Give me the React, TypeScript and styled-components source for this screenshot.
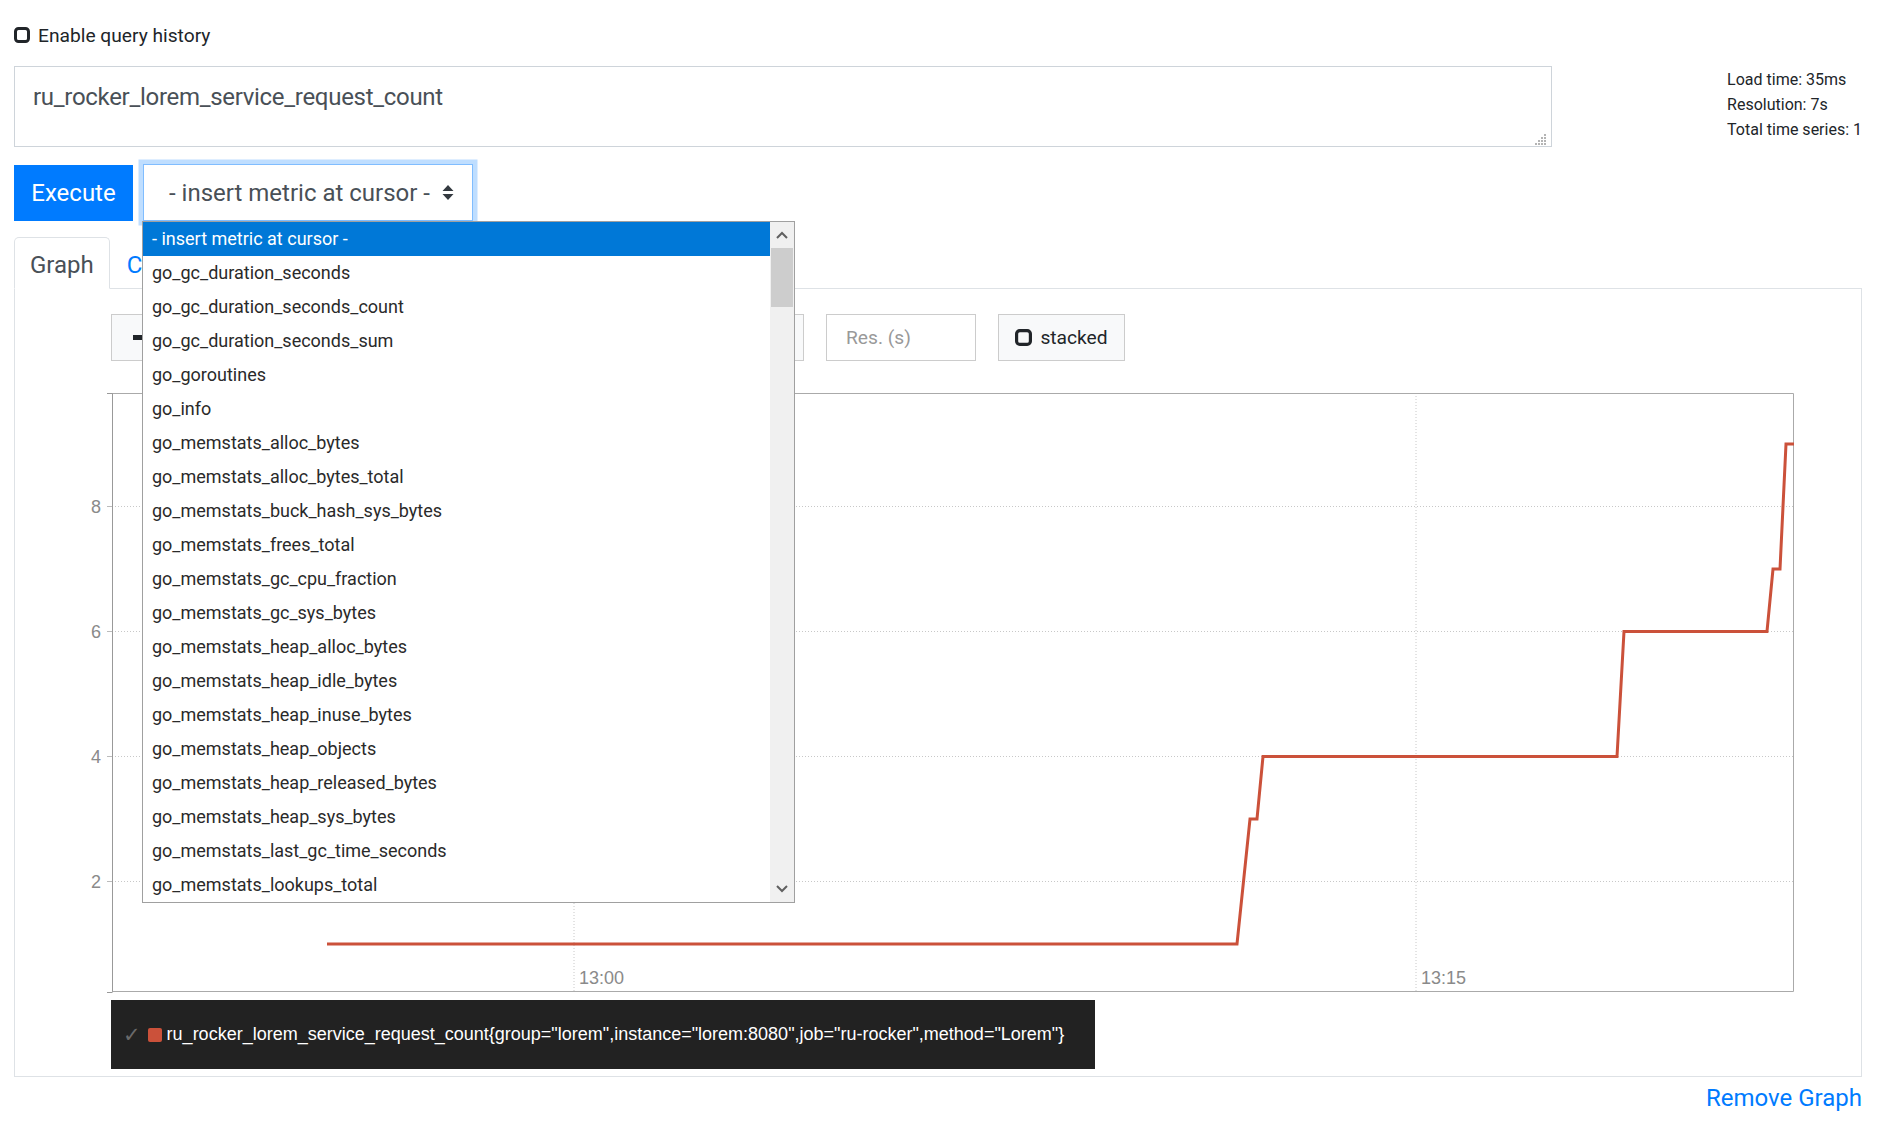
import { createGlobalStyle, styled } from "styled-components";

const METRICS = [
  "- insert metric at cursor -",
  "go_gc_duration_seconds",
  "go_gc_duration_seconds_count",
  "go_gc_duration_seconds_sum",
  "go_goroutines",
  "go_info",
  "go_memstats_alloc_bytes",
  "go_memstats_alloc_bytes_total",
  "go_memstats_buck_hash_sys_bytes",
  "go_memstats_frees_total",
  "go_memstats_gc_cpu_fraction",
  "go_memstats_gc_sys_bytes",
  "go_memstats_heap_alloc_bytes",
  "go_memstats_heap_idle_bytes",
  "go_memstats_heap_inuse_bytes",
  "go_memstats_heap_objects",
  "go_memstats_heap_released_bytes",
  "go_memstats_heap_sys_bytes",
  "go_memstats_last_gc_time_seconds",
  "go_memstats_lookups_total",
];

// chart geometry (svg coords, origin 32px left of the plot's y axis)
const PLOT_LEFT = 32;
const PLOT_RIGHT = 1714;
const PLOT_BOTTOM = 599;
const valueY = (v: number) => 613.5 - 62.5 * v;

const SERIES: [number, number][] = [
  [247, 1],
  [1157, 1],
  [1170, 3],
  [1177, 3],
  [1183, 4],
  [1537, 4],
  [1544, 6],
  [1687, 6],
  [1693, 7],
  [1700, 7],
  [1706, 9],
  [1714, 9],
];

const GlobalStyle = createGlobalStyle`
  body {
    margin: 0;
    background: #fff;
    color: #212529;
    font-family: Roboto, "Segoe UI", "Liberation Sans", sans-serif;
  }
  * { box-sizing: border-box; }
`;

const Page = styled.div`
  padding: 25px 18px 20px 14px;
`;

const HistoryToggle = styled.label`
  display: flex;
  align-items: center;
  gap: 8px;
  height: 20px;
  font-size: 19.2px;
  color: #212529;
`;

const QueryRow = styled.div`
  display: grid;
  grid-template-columns: 1538px 1fr;
  margin-top: 21px;
`;

const ExpressionBox = styled.div`
  position: relative;
  height: 81px;
  border: 1px solid #ced4da;
  padding: 12px 18px;
  font-size: 24px;
  letter-spacing: -0.3px;
  line-height: 36px;
  color: #495057;
`;

const Grip = styled.svg`
  position: absolute;
  right: 4px;
  bottom: 1px;
`;

const Stats = styled.div`
  justify-self: end;
  font-size: 16px;
  line-height: 25px;
  color: #212529;
  margin-top: 1px;
`;

const ActionRow = styled.div`
  display: flex;
  align-items: flex-start;
  margin-top: 17px;
`;

const ExecuteButton = styled.button`
  width: 119px;
  height: 56px;
  margin-top: 1px;
  border: none;
  background: #007bff;
  color: #fff;
  font-family: inherit;
  font-size: 24px;
  padding: 0;
`;

const SelectWrap = styled.div`
  position: relative;
  margin-left: 10px;
  z-index: 5;
`;

const SelectBox = styled.div`
  width: 330px;
  height: 57px;
  border: 1px solid #80bdff;
  box-shadow: 0 0 0 4.5px rgba(0, 123, 255, 0.25);
  display: flex;
  align-items: center;
  justify-content: space-between;
  padding: 0 18px 0 25px;
  font-size: 24px;
  color: #495057;
`;

const Dropdown = styled.div`
  position: absolute;
  left: -1px;
  top: 57px;
  width: 653px;
  border: 1px solid #a0a0a0;
  background: #fff;
  display: flex;
`;

const OptionList = styled.div`
  flex: 1;
`;

const Option = styled.div<{ $active?: boolean }>`
  height: 34px;
  line-height: 34px;
  padding-left: 9px;
  font-size: 18px;
  white-space: nowrap;
  background: ${({ $active }) => ($active ? "#0078d7" : "#fff")};
  color: ${({ $active }) => ($active ? "#fff" : "#2a2a2a")};
`;

const Scrollbar = styled.div`
  width: 24px;
  background: #f0f0f0;
  display: flex;
  flex-direction: column;
`;

const ScrollArrow = styled.div`
  height: 26px;
  display: flex;
  align-items: center;
  justify-content: center;
`;

const ScrollThumb = styled.div`
  height: 59px;
  margin: 0 1px;
  background: #cdcdcd;
`;

const ScrollTrack = styled.div`
  flex: 1;
`;

const TabBar = styled.div`
  display: flex;
  height: 52px;
  margin-top: 16px;
  border-bottom: 1px solid #dee2e6;
`;

const Tab = styled.div<{ $active?: boolean }>`
  height: 52px;
  padding: 4px 15px 0 ${({ $active }) => ($active ? 15 : 16)}px;
  display: flex;
  align-items: center;
  font-size: 24px;
  border: 1px solid ${({ $active }) => ($active ? "#dee2e6" : "transparent")};
  border-bottom-color: ${({ $active }) => ($active ? "#fff" : "transparent")};
  border-radius: 5px 5px 0 0;
  background: ${({ $active }) => ($active ? "#fff" : "transparent")};
  color: ${({ $active }) => ($active ? "#495057" : "#007bff")};
  margin-bottom: -1px;
`;

const Panel = styled.div`
  border: 1px solid #dee2e6;
  border-top: none;
  padding: 25px 67px 7px 96px;
`;

const Controls = styled.div`
  display: flex;
  height: 47px;
  gap: 22px;
`;

const InputGroup = styled.div<{ $width: number }>`
  display: flex;
  flex: 0 0 ${({ $width }) => $width}px;
`;

const LightButton = styled.div<{ $width?: number }>`
  flex: 0 0 ${({ $width }) => ($width ? `${$width}px` : "auto")};
  height: 47px;
  display: flex;
  align-items: center;
  justify-content: center;
  gap: 8px;
  padding: ${({ $width }) => ($width ? "0" : "0 19px")};
  border: 1px solid #ccc;
  background: #f8f9fa;
  font-size: 19.2px;
  color: #212529;
`;

const TextInput = styled.div<{ $width?: number }>`
  flex: ${({ $width }) => ($width ? `0 0 ${$width}px` : "1")};
  min-width: 0;
  height: 47px;
  display: flex;
  align-items: center;
  padding: 0 19px;
  border: 1px solid #ccc;
  background: #fff;
  font-size: 19.2px;
  color: #999;
`;

const ChartSvg = styled.svg`
  display: block;
  margin: 32px 0 0 -31px;
  overflow: visible;
`;

const Legend = styled.div`
  width: 984px;
  height: 69px;
  margin-top: 7px;
  background: #222;
  display: flex;
  align-items: center;
  padding-left: 12px;
  font-family: "Liberation Sans", Arial, sans-serif;
  font-size: 18px;
  color: #fff;
  white-space: nowrap;
`;

const Check = styled.span`
  color: #6a6a6a;
  font-family: "DejaVu Sans", sans-serif;
  font-size: 21px;
  margin-right: 7px;
`;

const Swatch = styled.span`
  display: inline-block;
  width: 14px;
  height: 14px;
  border-radius: 2px;
  background: #cb513a;
  margin-right: 5px;
`;

const RemoveLink = styled.div`
  text-align: right;
  margin-top: 3px;
  font-size: 24px;
  line-height: 36px;
  color: #007bff;
`;

const SquareIcon = ({ size = 16 }: { size?: number }) => (
  <svg width={size} height={size} viewBox="0 0 16 16">
    <rect x="1.5" y="1.5" width="13" height="13" rx="3" fill="none" stroke="#212529" strokeWidth="3" />
  </svg>
);

const Chevron = ({ up }: { up?: boolean }) => (
  <svg width="12" height="8" viewBox="0 0 12 8">
    <path
      d={up ? "M1 7 L6 2 L11 7" : "M1 1 L6 6 L11 1"}
      fill="none"
      stroke="#606060"
      strokeWidth="2"
    />
  </svg>
);

const Chart = () => {
  const ticks = [8, 6, 4, 2];
  const linePoints = SERIES.map(([x, v]) => `${x},${valueY(v)}`).join(" ");
  return (
    <ChartSvg width={1714} height={600} viewBox="0 0 1714 600">
      {ticks.map((t) => (
        <g key={t}>
          <line
            x1={PLOT_LEFT}
            x2={PLOT_RIGHT}
            y1={valueY(t)}
            y2={valueY(t)}
            stroke="#c8c8c8"
            strokeDasharray="1 2"
          />
          <line x1={PLOT_LEFT - 5} x2={PLOT_LEFT} y1={valueY(t)} y2={valueY(t)} stroke="#bbb" />
          <text
            x={21}
            y={valueY(t) + 6}
            textAnchor="end"
            fontFamily="Liberation Sans, Arial, sans-serif"
            fontSize="18"
            fill="#8a8a8a"
          >
            {t}
          </text>
        </g>
      ))}
      {[
        { x: 494, label: "13:00" },
        { x: 1336, label: "13:15" },
      ].map(({ x, label }) => (
        <g key={label}>
          <line x1={x} x2={x} y1={0} y2={PLOT_BOTTOM} stroke="#c8c8c8" strokeDasharray="1 2" />
          <text
            x={x + 5}
            y={591}
            fontFamily="Liberation Sans, Arial, sans-serif"
            fontSize="18"
            fill="#8a8a8a"
          >
            {label}
          </text>
        </g>
      ))}
      <path
        d={`M${PLOT_LEFT} 0.5 H${PLOT_RIGHT - 0.5} V${PLOT_BOTTOM - 0.5} H${PLOT_LEFT}`}
        fill="none"
        stroke="#aaa"
      />
      <path
        d={`M${PLOT_LEFT - 5} 0.5 H${PLOT_LEFT + 0.5} V${PLOT_BOTTOM - 0.5} M${PLOT_LEFT - 5} ${PLOT_BOTTOM + 0.5} H${PLOT_LEFT + 0.5}`}
        fill="none"
        stroke="#999"
      />
      <polyline
        points={linePoints}
        fill="none"
        stroke="#cb513a"
        strokeWidth="3"
        strokeLinejoin="miter"
      />
    </ChartSvg>
  );
};

export default function App() {
  return (
    <>
      <GlobalStyle />
      <Page>
        <HistoryToggle>
          <SquareIcon />
          Enable query history
        </HistoryToggle>

        <QueryRow>
          <ExpressionBox>
            ru_rocker_lorem_service_request_count
            <Grip width="12" height="12" viewBox="0 0 12 12">
              {[
                [9, 1],
                [6, 4],
                [9, 4],
                [3, 7],
                [6, 7],
                [9, 7],
                [0, 10],
                [3, 10],
                [6, 10],
                [9, 10],
              ].map(([x, y]) => (
                <rect key={`${x}-${y}`} x={x} y={y} width="2" height="2" fill="#b4b4b4" />
              ))}
            </Grip>
          </ExpressionBox>
          <Stats>
            <div>Load time: 35ms</div>
            <div>Resolution: 7s</div>
            <div>Total time series: 1</div>
          </Stats>
        </QueryRow>

        <ActionRow>
          <ExecuteButton>Execute</ExecuteButton>
          <SelectWrap>
            <SelectBox>
              <span>- insert metric at cursor -</span>
              <svg width="12" height="15" viewBox="0 0 12 15">
                <path d="M6 0 L11.5 6 H0.5 Z M6 15 L11.5 9 H0.5 Z" fill="#343a40" />
              </svg>
            </SelectBox>
            <Dropdown>
              <OptionList>
                {METRICS.map((m, i) => (
                  <Option key={m} $active={i === 0}>
                    {m}
                  </Option>
                ))}
              </OptionList>
              <Scrollbar>
                <ScrollArrow>
                  <Chevron up />
                </ScrollArrow>
                <ScrollThumb />
                <ScrollTrack />
                <ScrollArrow>
                  <Chevron />
                </ScrollArrow>
              </Scrollbar>
            </Dropdown>
          </SelectWrap>
        </ActionRow>

        <TabBar>
          <Tab $active>Graph</Tab>
          <Tab>Console</Tab>
        </TabBar>

        <Panel>
          <Controls>
            {/* range and end-time groups sit under the open dropdown */}
            <InputGroup $width={222}>
              <LightButton $width={56}>
                <svg width="12" height="5" viewBox="0 0 12 5">
                  <rect width="12" height="5" fill="#212529" />
                </svg>
              </LightButton>
              <TextInput />
              <LightButton $width={42} />
            </InputGroup>
            <InputGroup $width={449}>
              <LightButton $width={42} />
              <TextInput />
              <LightButton $width={42} />
            </InputGroup>
            <TextInput $width={150}>Res. (s)</TextInput>
            <LightButton $width={127}>
              <SquareIcon size={17} />
              stacked
            </LightButton>
          </Controls>

          <Chart />

          <Legend>
            <Check>✓</Check>
            <Swatch />
            ru_rocker_lorem_service_request_count{"{"}group="lorem",instance="lorem:8080",job="ru-rocker",method="Lorem"{"}"}
          </Legend>
        </Panel>

        <RemoveLink>Remove Graph</RemoveLink>
      </Page>
    </>
  );
}
